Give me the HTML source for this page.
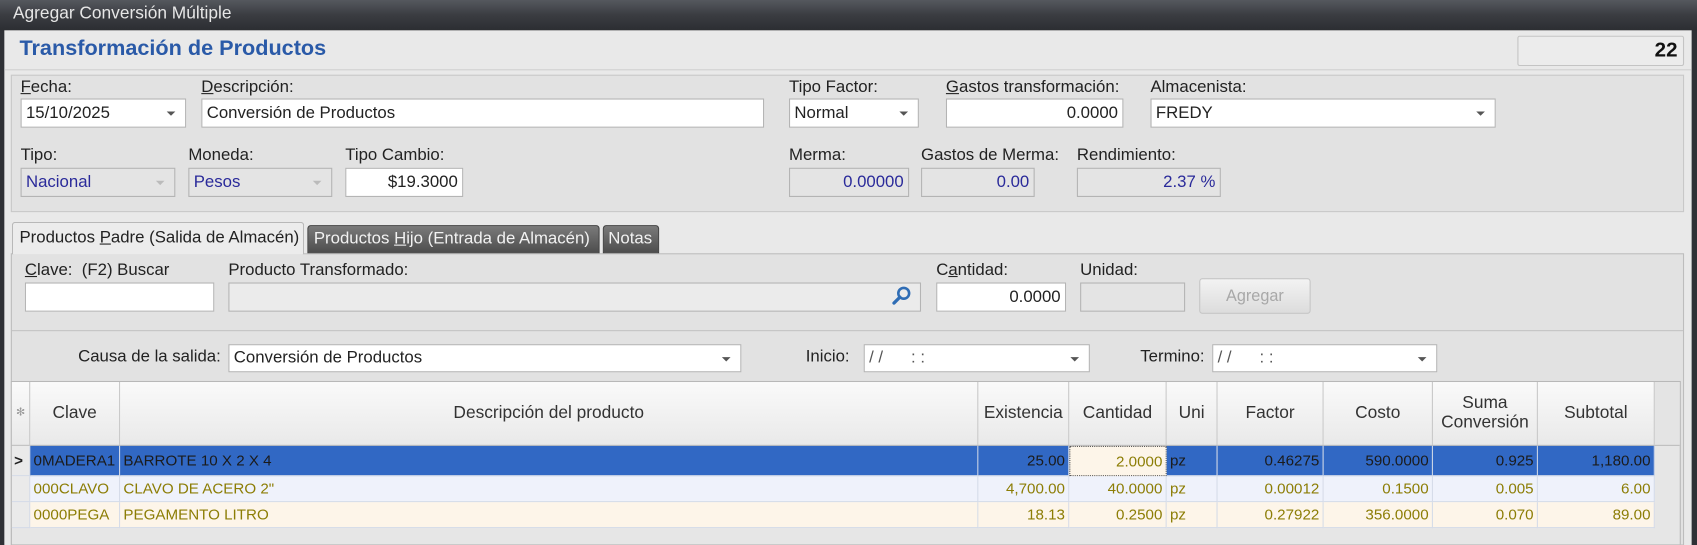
<!DOCTYPE html>
<html><head><meta charset="utf-8"><style>
*{box-sizing:border-box;margin:0;padding:0}
html,body{width:1697px;height:545px;overflow:hidden;background:#2f3136}
#w{position:absolute;left:0;top:0;width:1568px;height:504px;transform:scale(1.0823);transform-origin:0 0;font-family:"Liberation Sans",sans-serif;font-size:15.5px;color:#222}
.a{position:absolute}
.lbl{position:absolute;white-space:nowrap;font-size:15.5px;color:#222}
.in{position:absolute;background:#fff;border:1px solid #b4b4b4;height:27px;line-height:25px;padding:0 4px;white-space:nowrap;overflow:hidden;font-size:15.5px}
.ro{background:#e4e4e4}
.r{text-align:right}
.dd::after{content:"";position:absolute;right:9px;top:11px;border-left:4px solid transparent;border-right:4px solid transparent;border-top:4px solid #555}
.dis::after{border-top-color:#bbb}
.blue{color:#2a2a9a}
u{text-decoration:underline}
.grid{position:absolute;left:10px;top:352px;width:1543px;height:152px;background:#e6e6e6;border:1px solid #b8b8b8}
.th{position:absolute;top:0;height:59px;background:linear-gradient(#fafafa,#e9e9e9);border-right:1px solid #c8c8c8;border-bottom:1px solid #bcbcbc;display:flex;align-items:center;justify-content:center;text-align:center;color:#333;font-size:16px;line-height:18px}
.td{position:absolute;height:24px;line-height:23px;border-right:1px solid #d4dbe8;border-bottom:1px solid #d4dbe8;padding:0 3px;white-space:nowrap;overflow:hidden;color:#8c7d05;font-size:14px}
.h1{top:59px;height:28px;line-height:27px}
.h2{top:87px}
.h3{top:111px}
.sel{background:#3168c4;color:#1b1b1b}
.r2{background:#eff2fb}
.r3{background:#fdf5e9}
</style></head><body><div id="w">
<div class="a" style="left:0;top:0;width:1568px;height:28px;background:linear-gradient(#55585e,#3a3c41 50%,#2c2e32)"></div>
<div class="lbl" style="left:12px;top:4px;color:#e6e6e6;font-size:16px">Agregar Conversión Múltiple</div>
<div class="a" style="left:4px;top:28px;width:1559px;height:476px;background:#e9e9e9"></div>
<div class="lbl" style="left:18px;top:34px;font-size:20px;font-weight:bold;color:#2a5aa8">Transformación de Productos</div>
<div class="a" style="left:1402px;top:33px;width:154px;height:28px;border:1px solid #c4c4c4;background:#ececec;border-radius:2px"></div>
<div class="lbl" style="left:1402px;top:36px;width:148px;text-align:right;font-size:19px;font-weight:bold;color:#111">22</div>
<div class="a" style="left:4px;top:64px;width:1559px;height:1px;background:#cfcfcf"></div>
<div class="a" style="left:10px;top:69px;width:1546px;height:127px;background:#e2e2e2;border:1px solid #c8c8c8"></div>
<div class="lbl" style="left:19px;top:72px"><u>F</u>echa:</div>
<div class="in dd" style="left:19px;top:91px;width:153px">15/10/2025</div>
<div class="lbl" style="left:186px;top:72px"><u>D</u>escripción:</div>
<div class="in" style="left:186px;top:91px;width:520px">Conversión de Productos</div>
<div class="lbl" style="left:729px;top:72px">Tipo Factor:</div>
<div class="in dd" style="left:729px;top:91px;width:120px">Normal</div>
<div class="lbl" style="left:874px;top:72px"><u>G</u>astos transformación:</div>
<div class="in r" style="left:874px;top:91px;width:164px">0.0000</div>
<div class="lbl" style="left:1063px;top:72px">Almacenista:</div>
<div class="in dd" style="left:1063px;top:91px;width:319px">FREDY</div>
<div class="lbl" style="left:19px;top:135px">Tipo:</div>
<div class="in ro dd dis blue" style="left:19px;top:155px;width:143px">Nacional</div>
<div class="lbl" style="left:174px;top:135px">Moneda:</div>
<div class="in ro dd dis blue" style="left:174px;top:155px;width:133px">Pesos</div>
<div class="lbl" style="left:319px;top:135px">Tipo Cambio:</div>
<div class="in r" style="left:319px;top:155px;width:109px">$19.3000</div>
<div class="lbl" style="left:729px;top:135px">Merma:</div>
<div class="in ro r blue" style="left:729px;top:155px;width:111px">0.00000</div>
<div class="lbl" style="left:851px;top:135px">Gastos de Merma:</div>
<div class="in ro r blue" style="left:851px;top:155px;width:105px">0.00</div>
<div class="lbl" style="left:995px;top:135px">Rendimiento:</div>
<div class="in ro r blue" style="left:995px;top:155px;width:133px">2.37 %</div>
<div class="a" style="left:10px;top:234px;width:1546px;height:270px;background:#e2e2e2;border:1px solid #bdbdbd"></div>
<div class="a" style="left:11px;top:205px;width:270px;height:30px;background:#ececec;border:1px solid #b8b8b8;border-bottom:none;border-radius:3px 3px 0 0"></div>
<div class="lbl" style="left:18px;top:211px">Productos <u>P</u>adre (Salida de Almacén)</div>
<div class="a" style="left:284px;top:208px;width:270px;height:26px;background:linear-gradient(#7a7a7a,#4e4e4e);border:1px solid #444;border-radius:3px 3px 0 0"></div>
<div class="lbl" style="left:290px;top:212px;color:#f2f2f2">Productos <u>H</u>ijo (Entrada de Almacén)</div>
<div class="a" style="left:557px;top:208px;width:52px;height:26px;background:linear-gradient(#7a7a7a,#4e4e4e);border:1px solid #444;border-radius:3px 3px 0 0"></div>
<div class="lbl" style="left:562px;top:212px;color:#f2f2f2">Notas</div>
<div class="lbl" style="left:23px;top:241px"><u>C</u>lave:&nbsp; (F2) Buscar</div>
<div class="in" style="left:23px;top:261px;width:175px"></div>
<div class="lbl" style="left:211px;top:241px">Producto Transformado:</div>
<div class="in ro" style="left:211px;top:261px;width:640px;background:#ebebeb"></div>
<svg class="a" style="left:822px;top:263px" width="22" height="22" viewBox="0 0 22 22"><circle cx="13" cy="8" r="5" fill="none" stroke="#2f6db5" stroke-width="2.4"/><line x1="9.5" y1="11.5" x2="4" y2="17" stroke="#2f6db5" stroke-width="3" stroke-linecap="round"/></svg>
<div class="lbl" style="left:865px;top:241px">C<u>a</u>ntidad:</div>
<div class="in r" style="left:865px;top:261px;width:120px">0.0000</div>
<div class="lbl" style="left:998px;top:241px">Unidad:</div>
<div class="in ro" style="left:998px;top:261px;width:97px"></div>
<div class="a" style="left:1108px;top:257px;width:103px;height:33px;border:1px solid #c6c6c6;border-radius:3px;background:linear-gradient(#f3f3f3,#dcdcdc);color:#a8a8a8;text-align:center;line-height:31px;font-size:15px">Agregar</div>
<div class="a" style="left:11px;top:305px;width:1544px;height:1px;background:#c4c4c4"></div>
<div class="lbl" style="left:20px;top:321px;width:184px;text-align:right">Causa de la salida:</div>
<div class="in dd" style="left:211px;top:318px;width:474px;height:26px;line-height:24px">Conversión de Productos</div>
<div class="lbl" style="left:700px;top:321px;width:85px;text-align:right">Inicio:</div>
<div class="in dd" style="left:798px;top:318px;width:209px;height:26px;line-height:24px;color:#555">/ /&nbsp;&nbsp;&nbsp;&nbsp;&nbsp;&nbsp;: :</div>
<div class="lbl" style="left:1000px;top:321px;width:113px;text-align:right">Termino:</div>
<div class="in dd" style="left:1120px;top:318px;width:208px;height:26px;line-height:24px;color:#555">/ /&nbsp;&nbsp;&nbsp;&nbsp;&nbsp;&nbsp;: :</div>
<div class="grid">
<div class="th" style="left:0;width:17px;font-size:10px;color:#999">✻</div>
<div class="th" style="left:17px;width:83px">Clave</div>
<div class="th" style="left:100px;width:793px">Descripción del producto</div>
<div class="th" style="left:893px;width:84px">Existencia</div>
<div class="th" style="left:977px;width:90px">Cantidad</div>
<div class="th" style="left:1067px;width:47px">Uni</div>
<div class="th" style="left:1114px;width:98px">Factor</div>
<div class="th" style="left:1212px;width:101px">Costo</div>
<div class="th" style="left:1313px;width:97px">Suma<br>Conversión</div>
<div class="th" style="left:1410px;width:108px">Subtotal</div>
<div class="th" style="left:1518px;width:23px;border-right:none;background:#e4e4e4"></div>
<div class="td h1" style="left:0;width:17px;background:#eaeaea;color:#222;font-weight:bold;padding:0 2px">&gt;</div>
<div class="td h2" style="left:0;width:17px;background:#eaeaea"></div>
<div class="td h3" style="left:0;width:17px;background:#eaeaea"></div>
<div class="td h1 sel" style="left:17px;width:83px">0MADERA1</div>
<div class="td h1 sel" style="left:100px;width:793px">BARROTE 10 X 2 X 4</div>
<div class="td h1 sel r" style="left:893px;width:84px">25.00</div>
<div class="td h1 r r3" style="left:977px;width:90px;border:1px dotted #555">2.0000</div>
<div class="td h1 sel" style="left:1067px;width:47px">pz</div>
<div class="td h1 sel r" style="left:1114px;width:98px">0.46275</div>
<div class="td h1 sel r" style="left:1212px;width:101px">590.0000</div>
<div class="td h1 sel r" style="left:1313px;width:97px">0.925</div>
<div class="td h1 sel r" style="left:1410px;width:108px">1,180.00</div>
<div class="td h2 r2" style="left:17px;width:83px">000CLAVO</div>
<div class="td h2 r2" style="left:100px;width:793px">CLAVO DE ACERO 2"</div>
<div class="td h2 r2 r" style="left:893px;width:84px">4,700.00</div>
<div class="td h2 r2 r" style="left:977px;width:90px">40.0000</div>
<div class="td h2 r2" style="left:1067px;width:47px">pz</div>
<div class="td h2 r2 r" style="left:1114px;width:98px">0.00012</div>
<div class="td h2 r2 r" style="left:1212px;width:101px">0.1500</div>
<div class="td h2 r2 r" style="left:1313px;width:97px">0.005</div>
<div class="td h2 r2 r" style="left:1410px;width:108px">6.00</div>
<div class="td h3 r3" style="left:17px;width:83px">0000PEGA</div>
<div class="td h3 r3" style="left:100px;width:793px">PEGAMENTO LITRO</div>
<div class="td h3 r3 r" style="left:893px;width:84px">18.13</div>
<div class="td h3 r3 r" style="left:977px;width:90px">0.2500</div>
<div class="td h3 r3" style="left:1067px;width:47px">pz</div>
<div class="td h3 r3 r" style="left:1114px;width:98px">0.27922</div>
<div class="td h3 r3 r" style="left:1212px;width:101px">356.0000</div>
<div class="td h3 r3 r" style="left:1313px;width:97px">0.070</div>
<div class="td h3 r3 r" style="left:1410px;width:108px">89.00</div>
</div>
</div></body></html>
